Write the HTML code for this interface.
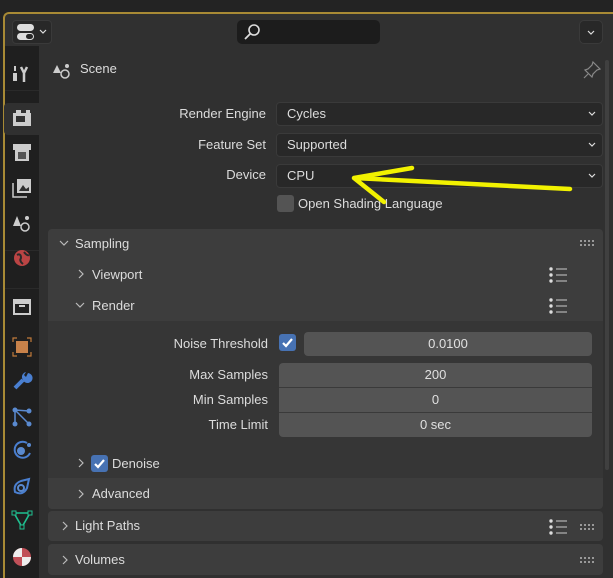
<!DOCTYPE html>
<html style="overflow:hidden;width:613px;height:578px"><head><style>
*{margin:0;padding:0;box-sizing:border-box}
body{width:613px;height:578px;background:#232323;position:relative;overflow:hidden;font-family:"Liberation Sans","DejaVu Sans",sans-serif;font-size:13px;color:#dcdcdc}
.a{position:absolute}
.frame{left:3px;top:12px;width:610px;height:566px;border:2px solid #a88a35;border-right:none;border-bottom:none;border-radius:6px 0 0 0;background:#303030}
.tabs{left:5px;top:46px;width:34px;height:532px;background:#1f1f1f}
.lbl{text-align:right;color:#dcdcdc}
.dd{background:#282828;border:1px solid #3a3a3a;border-radius:4px;height:24px;padding-left:10px;line-height:22px}
.chev{position:absolute;right:6px;top:8px}
.num{background:#545454;border-radius:4px;text-align:center;line-height:24px;color:#e0e0e0}
.ph{background:#3d3d3d}
.tx{line-height:30px}
</style></head><body>
<div class="a frame"></div>
<div class="a tabs"></div>
<div class="a" style="left:5px;top:90px;width:34px;height:1px;background:#2a2a2a"></div>
<div class="a" style="left:5px;top:250px;width:34px;height:1px;background:#2a2a2a"></div>
<div class="a" style="left:5px;top:288px;width:34px;height:1px;background:#2a2a2a"></div>
<!-- header -->
<div class="a" style="left:12px;top:20px;width:40px;height:24px;border:1px solid #3a3a3a;border-radius:4px;background:#282828"></div>
<div class="a" style="left:17px;top:24px;width:17px;height:7px;background:#ddd;border-radius:4px"></div>
<div class="a" style="left:17px;top:33px;width:17px;height:7px;background:#ddd;border-radius:4px"></div>
<div class="a" style="left:26px;top:34px;width:7px;height:5px;background:#282828;border-radius:3px"></div>
<svg class="a" style="left:39px;top:29px" width="8" height="6"><path d="M1 1 L4 4 L7 1" stroke="#ddd" stroke-width="1.2" fill="none"/></svg>
<div class="a" style="left:237px;top:20px;width:143px;height:24px;background:#1c1c1c;border-radius:5px"></div>
<svg class="a" style="left:243px;top:23px" width="18" height="18"><circle cx="11" cy="7" r="5" stroke="#ddd" stroke-width="1.6" fill="none"/><line x1="7" y1="11" x2="2" y2="16" stroke="#ddd" stroke-width="1.8"/></svg>
<div class="a" style="left:579px;top:20px;width:24px;height:24px;background:#282828;border:1px solid #3a3a3a;border-radius:5px"></div>
<svg class="a" style="left:587px;top:30px" width="8" height="6"><path d="M1 1 L4 4 L7 1" stroke="#ddd" stroke-width="1.2" fill="none"/></svg>
<!-- tab icons -->
<div class="a" style="left:4px;top:103px;width:35px;height:32px;background:#303030;border-radius:4px 0 0 4px"></div>
<svg class="a" style="left:11px;top:63px" width="22" height="22"><rect x="2" y="10" width="4" height="8" fill="#ccc"/><rect x="3" y="3" width="2" height="5" fill="#ccc"/><path d="M10 4 L13 10 L16 4 M13 10 V19" stroke="#ccc" stroke-width="2.5" fill="none"/></svg>
<svg class="a" style="left:11px;top:107px" width="22" height="22"><rect x="2" y="6" width="18" height="13" fill="#ccc"/><rect x="5" y="9" width="9" height="6" fill="#303030"/><rect x="5" y="3" width="5" height="3" fill="#ccc"/><rect x="15" y="3" width="4" height="3" fill="#ccc"/></svg>
<svg class="a" style="left:11px;top:142px" width="22" height="22"><rect x="2" y="2" width="18" height="6" fill="#ccc"/><rect x="4" y="8" width="14" height="11" fill="#ccc"/><rect x="7" y="10" width="8" height="7" fill="#555"/></svg>
<svg class="a" style="left:11px;top:177px" width="22" height="22"><rect x="6" y="2" width="14" height="14" fill="#ccc"/><path d="M8 14 L12 8 L15 12 L18 10 V14Z" fill="#303030"/><path d="M2 6 V20 H16" stroke="#ccc" stroke-width="1.5" fill="none"/></svg>
<svg class="a" style="left:11px;top:212px" width="22" height="22"><path d="M6 4 L10 14 H2Z" fill="#ccc"/><circle cx="14" cy="15" r="4" stroke="#ccc" stroke-width="1.5" fill="none"/><circle cx="16" cy="6" r="2" fill="#ccc"/></svg>
<svg class="a" style="left:11px;top:247px" width="22" height="22"><circle cx="11" cy="11" r="8" fill="#b44"/><path d="M6 8 Q10 6 10 11 Q8 14 12 17 M13 5 Q16 9 18 8" stroke="#2a2a2a" stroke-width="2" fill="none"/></svg>
<svg class="a" style="left:11px;top:295px" width="22" height="22"><rect x="2" y="4" width="18" height="4" fill="#ccc"/><rect x="3" y="8" width="16" height="11" stroke="#ccc" stroke-width="2" fill="none"/><rect x="8" y="10" width="6" height="2" fill="#ccc"/></svg>
<svg class="a" style="left:11px;top:336px" width="22" height="22"><path d="M2 6V2H6M16 2H20V6M20 16V20H16M6 20H2V16" stroke="#c07a3a" stroke-width="1.2" fill="none"/><rect x="5" y="5" width="12" height="12" fill="#c8824a"/></svg>
<svg class="a" style="left:11px;top:369px" width="22" height="22"><path d="M4 19 L12 11" stroke="#4a7fd0" stroke-width="4"/><path d="M12 11 A5 5 0 1 0 17 4 L15 8 L13 6 L15 3 A5 5 0 0 0 12 11" fill="#4a7fd0"/></svg>
<svg class="a" style="left:11px;top:406px" width="22" height="22"><path d="M4 4 L18 5 M4 4 L18 18 M4 4 V18" stroke="#5a8ad0" stroke-width="1.5"/><circle cx="4" cy="4" r="2.5" fill="#5a8ad0"/><circle cx="18" cy="5" r="2.5" fill="#5a8ad0"/><circle cx="18" cy="18" r="2.5" fill="#5a8ad0"/><circle cx="4" cy="18" r="2.5" fill="#5a8ad0"/></svg>
<svg class="a" style="left:11px;top:439px" width="22" height="22"><path d="M16 4 A8 8 0 1 0 19 14" stroke="#4a7fd0" stroke-width="2" fill="none"/><circle cx="10" cy="12" r="4" fill="#5a8ad0"/><circle cx="18" cy="6" r="2" fill="#5a8ad0"/></svg>
<svg class="a" style="left:11px;top:476px" width="22" height="22"><path d="M4 16 Q2 8 10 5 L18 3 L16 12 Q12 20 4 16Z" stroke="#4a7fd0" stroke-width="2" fill="none"/><circle cx="10" cy="12" r="3" stroke="#5a8ad0" stroke-width="2" fill="none"/></svg>
<svg class="a" style="left:11px;top:509px" width="22" height="22"><path d="M3 4 H19 L11 18Z" stroke="#1fc090" stroke-width="1.6" fill="none"/><rect x="1" y="2" width="4" height="4" fill="#1f1f1f" stroke="#1fc090"/><rect x="17" y="2" width="4" height="4" fill="#1f1f1f" stroke="#1fc090"/><rect x="9" y="16" width="4" height="4" fill="#1f1f1f" stroke="#1fc090"/></svg>
<svg class="a" style="left:11px;top:546px" width="22" height="22"><circle cx="11" cy="11" r="9" fill="#c05058"/><path d="M11 11 H20 A9 9 0 0 1 11 20Z M11 11 H2 A9 9 0 0 1 11 2Z" fill="#eee"/></svg>
<!-- scene -->
<svg class="a" style="left:52px;top:61px" width="20" height="20"><path d="M5 4 L9 12 H1Z" fill="#ccc"/><circle cx="13" cy="13" r="4" stroke="#ccc" stroke-width="1.5" fill="none"/><circle cx="15" cy="5" r="2" fill="#ccc"/></svg>
<div class="a" style="left:80px;top:61px">Scene</div>
<svg class="a" style="left:582px;top:60px" width="20" height="20"><path d="M11 2 L18 9 L15 10 L11 14 L10 17 L3 10 L6 9 L10 5Z M6 14 L2 18" stroke="#888" stroke-width="1.2" fill="none"/></svg>
<!-- props -->
<div class="a lbl" style="left:100px;width:166px;top:106px">Render Engine</div>
<div class="a lbl" style="left:100px;width:166px;top:137px">Feature Set</div>
<div class="a lbl" style="left:100px;width:166px;top:167px">Device</div>
<div class="a dd" style="left:276px;top:102px;width:327px">Cycles<svg class="chev" width="8" height="6"><path d="M1 1 L4 4 L7 1" stroke="#ddd" stroke-width="1.2" fill="none"/></svg></div>
<div class="a dd" style="left:276px;top:133px;width:327px">Supported<svg class="chev" width="8" height="6"><path d="M1 1 L4 4 L7 1" stroke="#ddd" stroke-width="1.2" fill="none"/></svg></div>
<div class="a dd" style="left:276px;top:164px;width:327px">CPU<svg class="chev" width="8" height="6"><path d="M1 1 L4 4 L7 1" stroke="#ddd" stroke-width="1.2" fill="none"/></svg></div>
<div class="a" style="left:277px;top:195px;width:17px;height:17px;background:#545454;border-radius:3px"></div>
<div class="a" style="left:298px;top:196px">Open Shading Language</div>
<svg class="a" style="left:340px;top:160px" width="240" height="50"><path d="M14 18 L72 8 M14 18 L230 29 M14 18 L44 42" stroke="#f2f200" stroke-width="4.5" stroke-linecap="round" fill="none"/></svg>
<!-- scrollbar -->
<div class="a" style="left:605px;top:60px;width:4px;height:410px;background:#404040;border-radius:2px"></div>
<!-- sampling panel -->
<div class="a ph" style="left:48px;top:229px;width:555px;height:280px;border-radius:4px"></div>
<div class="a" style="left:48px;top:321px;width:555px;height:157px;background:#363636"></div>
<svg class="a" style="left:59px;top:240px" width="10" height="7"><path d="M1 1 L5 5 L9 1" stroke="#bbb" stroke-width="1.2" fill="none"/></svg>
<div class="a tx" style="left:75px;top:229px">Sampling</div>
<svg class="a" style="left:580px;top:240px" width="16" height="6"><g fill="#999"><rect x="0" y="0" width="2" height="2"/><rect x="4" y="0" width="2" height="2"/><rect x="8" y="0" width="2" height="2"/><rect x="12" y="0" width="2" height="2"/><rect x="0" y="4" width="2" height="2"/><rect x="4" y="4" width="2" height="2"/><rect x="8" y="4" width="2" height="2"/><rect x="12" y="4" width="2" height="2"/></g></svg>
<svg class="a" style="left:78px;top:269px" width="7" height="10"><path d="M1 1 L5 5 L1 9" stroke="#bbb" stroke-width="1.2" fill="none"/></svg>
<div class="a tx" style="left:92px;top:260px">Viewport</div>
<svg class="a" style="left:75px;top:302px" width="10" height="7"><path d="M1 1 L5 5 L9 1" stroke="#bbb" stroke-width="1.2" fill="none"/></svg>
<div class="a tx" style="left:92px;top:291px">Render</div>
<svg class="a" style="left:548px;top:266px" width="20" height="18"><circle cx="3" cy="3" r="1.7" fill="#ddd"/><circle cx="3" cy="9" r="1.7" fill="#ddd"/><circle cx="3" cy="15" r="1.7" fill="#ddd"/><path d="M8 3H19M8 9H19M8 15H19" stroke="#ccc"/></svg>
<svg class="a" style="left:548px;top:297px" width="20" height="18"><circle cx="3" cy="3" r="1.7" fill="#ddd"/><circle cx="3" cy="9" r="1.7" fill="#ddd"/><circle cx="3" cy="15" r="1.7" fill="#ddd"/><path d="M8 3H19M8 9H19M8 15H19" stroke="#ccc"/></svg>
<div class="a lbl" style="left:100px;width:168px;top:336px">Noise Threshold</div>
<div class="a" style="left:279px;top:334px;width:17px;height:17px;background:#4772b3;border-radius:3px"><svg width="17" height="17"><path d="M4 9 L7 12 L13 5" stroke="#fff" stroke-width="2.2" fill="none"/></svg></div>
<div class="a num" style="left:304px;top:332px;width:288px;height:24px">0.0100</div>
<div class="a lbl" style="left:100px;width:168px;top:367px">Max Samples</div>
<div class="a lbl" style="left:100px;width:168px;top:392px">Min Samples</div>
<div class="a lbl" style="left:100px;width:168px;top:417px">Time Limit</div>
<div class="a num" style="left:279px;top:363px;width:313px;height:24px;border-radius:4px 4px 0 0">200</div>
<div class="a num" style="left:279px;top:388px;width:313px;height:24px;border-radius:0">0</div>
<div class="a num" style="left:279px;top:413px;width:313px;height:24px;border-radius:0 0 4px 4px">0 sec</div>
<div class="a" style="left:279px;top:387px;width:313px;height:1px;background:#3a3a3a"></div>
<div class="a" style="left:279px;top:412px;width:313px;height:1px;background:#3a3a3a"></div>
<svg class="a" style="left:78px;top:458px" width="7" height="10"><path d="M1 1 L5 5 L1 9" stroke="#bbb" stroke-width="1.2" fill="none"/></svg>
<div class="a" style="left:91px;top:455px;width:17px;height:17px;background:#4772b3;border-radius:3px"><svg width="17" height="17"><path d="M4 9 L7 12 L13 5" stroke="#fff" stroke-width="2.2" fill="none"/></svg></div>
<div class="a" style="left:112px;top:456px">Denoise</div>
<svg class="a" style="left:78px;top:489px" width="7" height="10"><path d="M1 1 L5 5 L1 9" stroke="#bbb" stroke-width="1.2" fill="none"/></svg>
<div class="a tx" style="left:92px;top:479px">Advanced</div>
<!-- light paths -->
<div class="a ph" style="left:48px;top:511px;width:555px;height:30px;border-radius:4px"></div>
<svg class="a" style="left:62px;top:521px" width="7" height="10"><path d="M1 1 L5 5 L1 9" stroke="#bbb" stroke-width="1.2" fill="none"/></svg>
<div class="a tx" style="left:75px;top:511px">Light Paths</div>
<svg class="a" style="left:548px;top:518px" width="20" height="18"><circle cx="3" cy="3" r="1.7" fill="#ddd"/><circle cx="3" cy="9" r="1.7" fill="#ddd"/><circle cx="3" cy="15" r="1.7" fill="#ddd"/><path d="M8 3H19M8 9H19M8 15H19" stroke="#ccc"/></svg>
<svg class="a" style="left:580px;top:524px" width="16" height="6"><g fill="#999"><rect x="0" y="0" width="2" height="2"/><rect x="4" y="0" width="2" height="2"/><rect x="8" y="0" width="2" height="2"/><rect x="12" y="0" width="2" height="2"/><rect x="0" y="4" width="2" height="2"/><rect x="4" y="4" width="2" height="2"/><rect x="8" y="4" width="2" height="2"/><rect x="12" y="4" width="2" height="2"/></g></svg>
<div class="a ph" style="left:48px;top:544px;width:555px;height:31px;border-radius:4px"></div>
<svg class="a" style="left:62px;top:555px" width="7" height="10"><path d="M1 1 L5 5 L1 9" stroke="#bbb" stroke-width="1.2" fill="none"/></svg>
<div class="a tx" style="left:75px;top:545px">Volumes</div>
<svg class="a" style="left:580px;top:557px" width="16" height="6"><g fill="#999"><rect x="0" y="0" width="2" height="2"/><rect x="4" y="0" width="2" height="2"/><rect x="8" y="0" width="2" height="2"/><rect x="12" y="0" width="2" height="2"/><rect x="0" y="4" width="2" height="2"/><rect x="4" y="4" width="2" height="2"/><rect x="8" y="4" width="2" height="2"/><rect x="12" y="4" width="2" height="2"/></g></svg>
</body></html>
